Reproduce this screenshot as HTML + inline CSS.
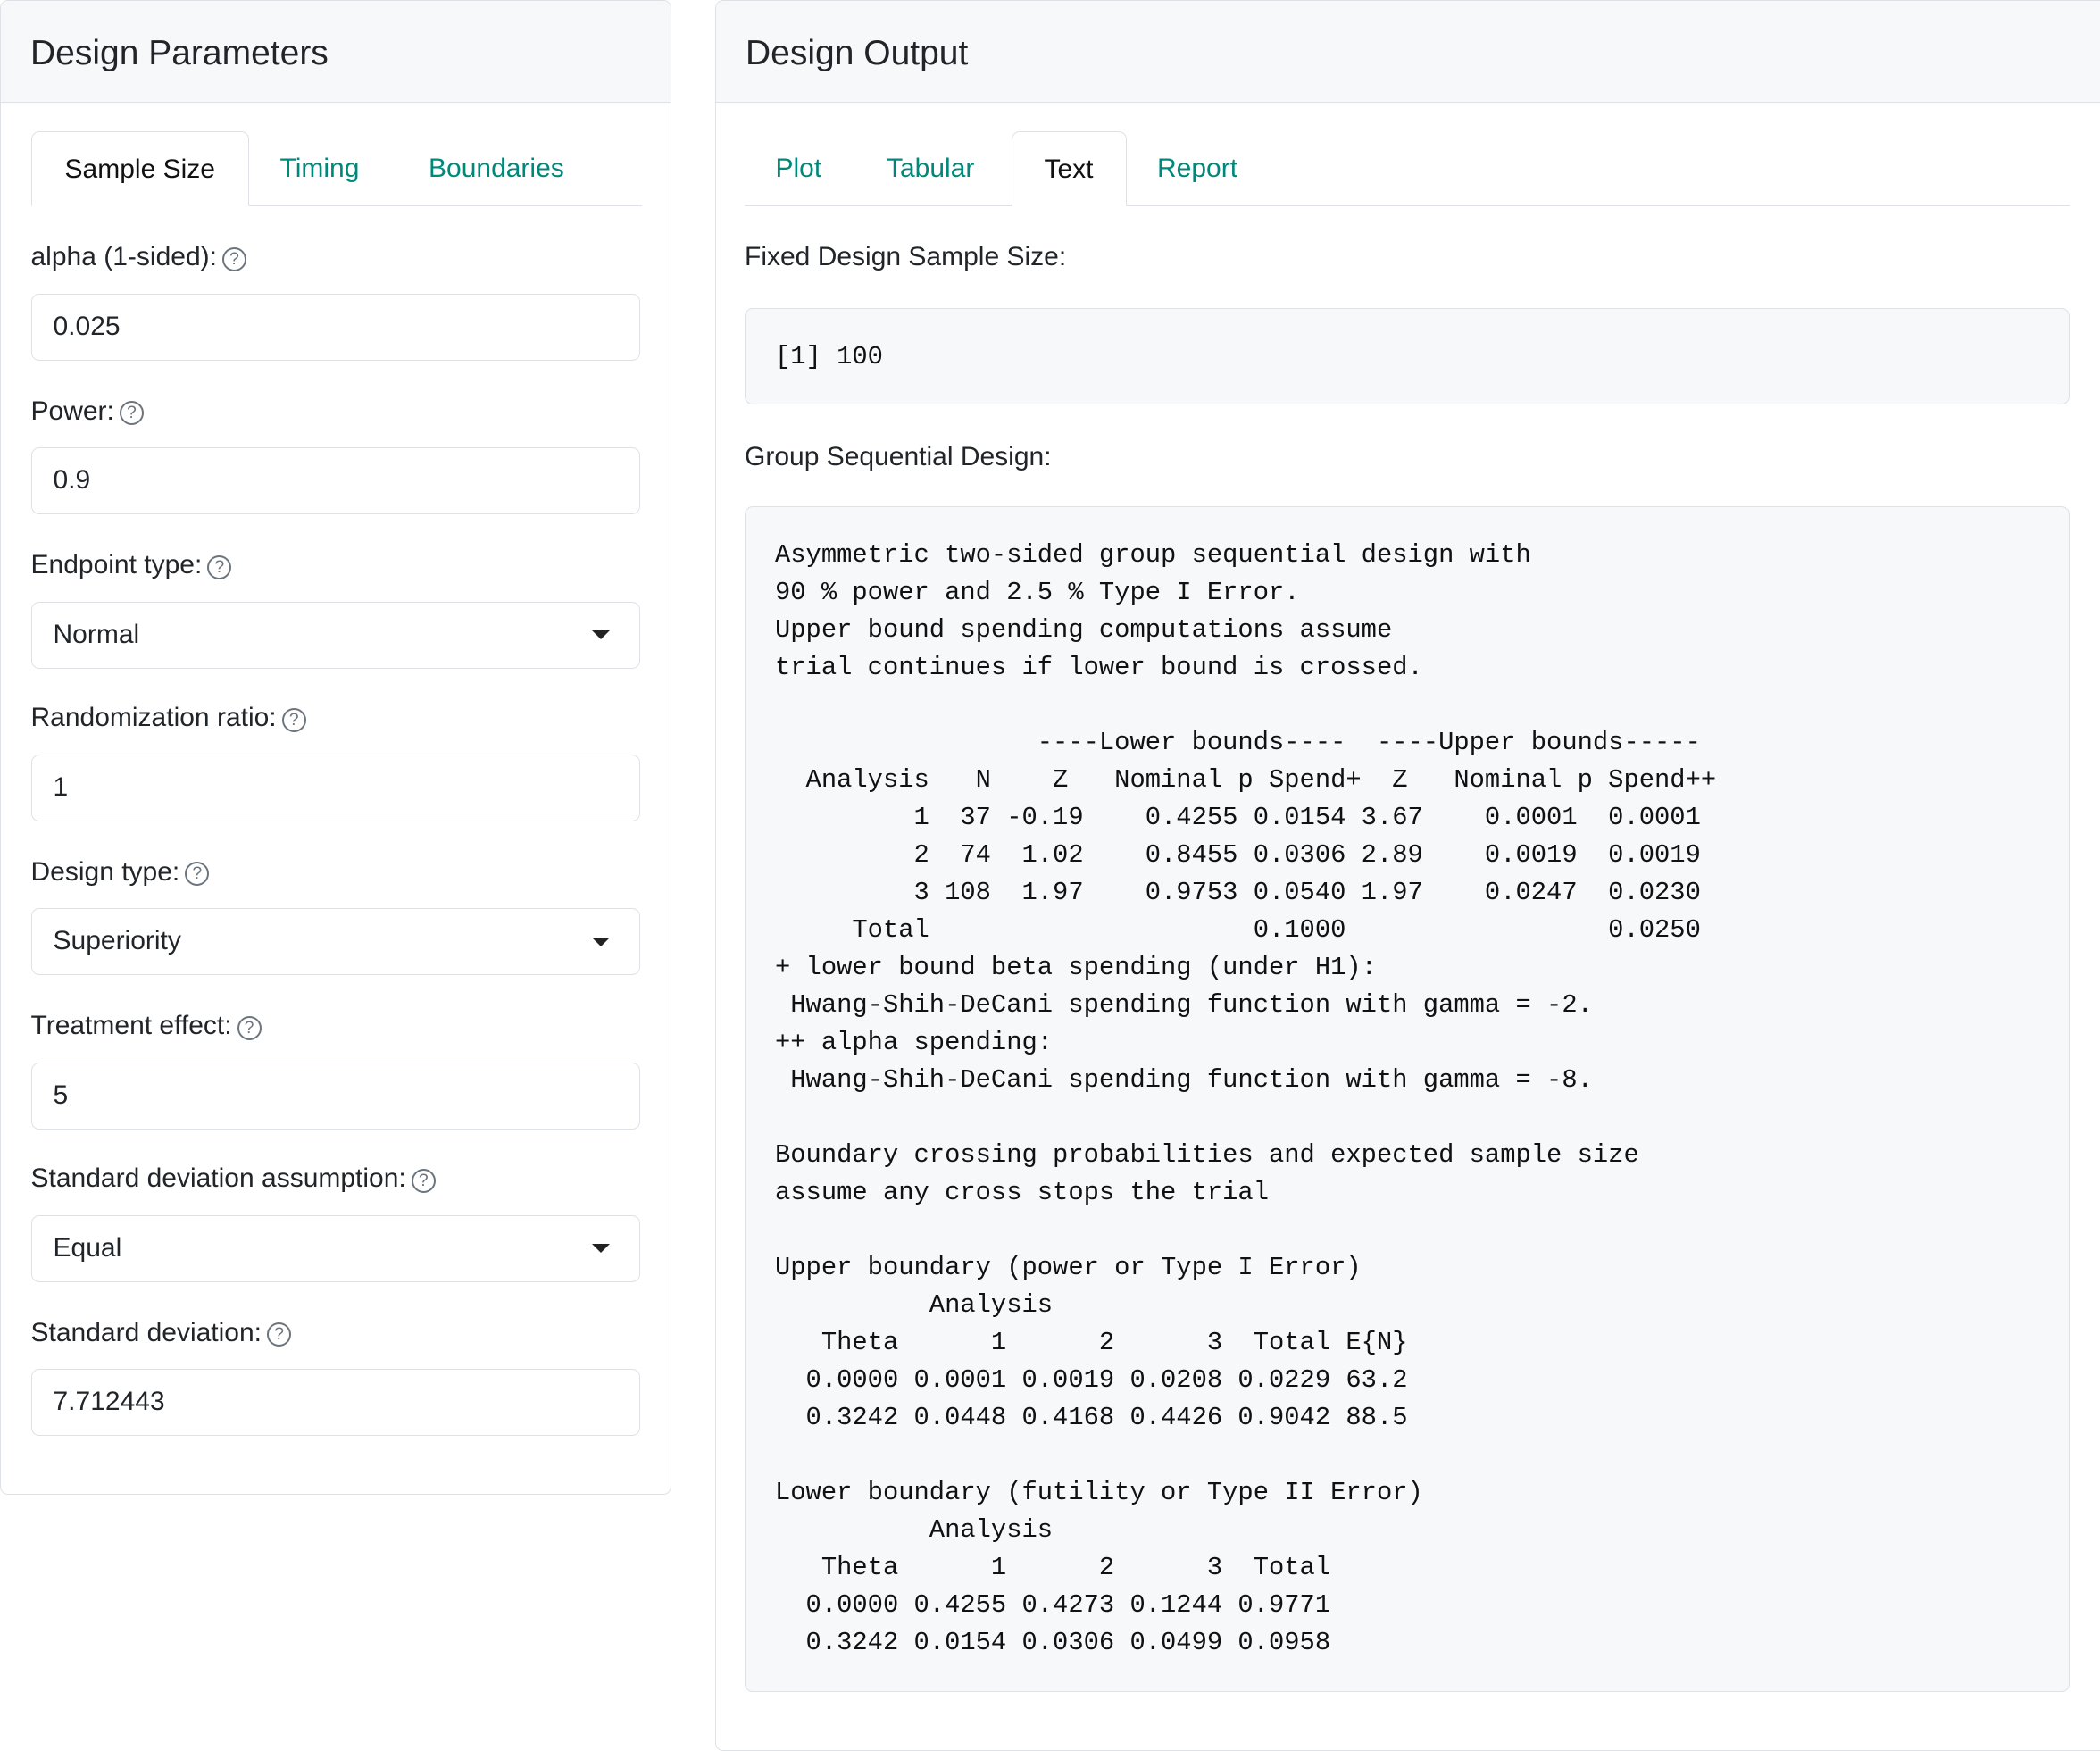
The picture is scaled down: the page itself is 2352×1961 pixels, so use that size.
<!DOCTYPE html>
<html><head><meta charset="utf-8"><style>
html,body{margin:0;padding:0;background:#fff;}
#w{zoom:1.5;width:1568px;height:1307px;position:relative;overflow:hidden;font-family:"Liberation Sans",sans-serif;color:#212529;}
.card{position:absolute;border:1px solid #dee2e6;border-radius:6px;background:#fff;overflow:hidden;box-sizing:border-box;}
.hd{height:76px;background:#f7f8fa;border-bottom:1px solid #dee2e6;box-sizing:border-box;font-size:26px;padding-left:22px;line-height:78px;}
.a{position:absolute;}
.tabs{position:absolute;height:56px;border-bottom:1px solid #dee2e6;box-sizing:border-box;}
.tab{position:absolute;top:0;height:56px;line-height:56px;font-size:20px;color:#00897b;}
.tab.on{color:#111;border:1px solid #dee2e6;border-bottom:1px solid #fff;border-radius:6px 6px 0 0;background:#fff;box-sizing:border-box;text-align:center;}
.lbl{position:absolute;left:23px;font-size:20px;line-height:24px;}
.q{display:inline-block;width:18px;height:18px;border:1.6px solid #6c757d;border-radius:50%;box-sizing:border-box;font-size:13px;line-height:15px;text-align:center;color:#6c757d;vertical-align:1px;margin-left:4px;}
.in{position:absolute;left:23px;width:455px;height:50px;border:1px solid #dee2e6;border-radius:6px;box-sizing:border-box;font-size:20px;line-height:48px;padding-left:16px;}
.car{position:absolute;right:22px;top:21px;width:0;height:0;border-left:7px solid transparent;border-right:7px solid transparent;border-top:7px solid #222;}
.pre{position:absolute;left:556px;width:989px;background:#f7f8fa;border:1px solid #dee2e6;border-radius:6px;box-sizing:border-box;}
pre{margin:0;font-family:"Liberation Mono",monospace;font-size:19.2px;line-height:28px;color:#111;}
</style></head><body><div id="w">
<div class="card" style="left:0;top:0;width:501px;height:1116px;">
<div class="hd">Design Parameters</div>
</div>
<div class="tabs" style="left:23px;top:98px;width:456px;">
<div class="tab on" style="left:0;width:163px;">Sample Size</div>
<div class="tab" style="left:186px;">Timing</div>
<div class="tab" style="left:297px;">Boundaries</div>
</div>
<div class="lbl" style="top:180px">alpha (1-sided):<span class="q">?</span></div>
<div class="in" style="top:219px">0.025</div>
<div class="lbl" style="top:295px">Power:<span class="q">?</span></div>
<div class="in" style="top:334px">0.9</div>
<div class="lbl" style="top:410px">Endpoint type:<span class="q">?</span></div>
<div class="in" style="top:449px">Normal<div class="car"></div></div>
<div class="lbl" style="top:524px">Randomization ratio:<span class="q">?</span></div>
<div class="in" style="top:563px">1</div>
<div class="lbl" style="top:639px">Design type:<span class="q">?</span></div>
<div class="in" style="top:678px">Superiority<div class="car"></div></div>
<div class="lbl" style="top:754px">Treatment effect:<span class="q">?</span></div>
<div class="in" style="top:793px">5</div>
<div class="lbl" style="top:868px">Standard deviation assumption:<span class="q">?</span></div>
<div class="in" style="top:907px">Equal<div class="car"></div></div>
<div class="lbl" style="top:983px">Standard deviation:<span class="q">?</span></div>
<div class="in" style="top:1022px">7.712443</div>

<div class="card" style="left:534px;top:0;width:1040px;height:1307px;">
<div class="hd">Design Output</div>
</div>
<div class="tabs" style="left:556px;top:98px;width:989px;">
<div class="tab" style="left:23px;">Plot</div>
<div class="tab" style="left:106px;">Tabular</div>
<div class="tab on" style="left:199px;width:86px;">Text</div>
<div class="tab" style="left:308px;">Report</div>
</div>
<div class="lbl" style="left:556px;top:180px">Fixed Design Sample Size:</div>
<div class="pre" style="top:230px;height:72px;"><pre style="position:absolute;left:22px;top:22px;">[1] 100</pre></div>
<div class="lbl" style="left:556px;top:329px">Group Sequential Design:</div>
<div class="pre" style="top:378px;height:885px;"><pre style="position:absolute;left:22px;top:22px;">Asymmetric two-sided group sequential design with
90 % power and 2.5 % Type I Error.
Upper bound spending computations assume
trial continues if lower bound is crossed.

                 ----Lower bounds----  ----Upper bounds-----
  Analysis   N    Z   Nominal p Spend+  Z   Nominal p Spend++
         1  37 -0.19    0.4255 0.0154 3.67    0.0001  0.0001
         2  74  1.02    0.8455 0.0306 2.89    0.0019  0.0019
         3 108  1.97    0.9753 0.0540 1.97    0.0247  0.0230
     Total                     0.1000                 0.0250
+ lower bound beta spending (under H1):
 Hwang-Shih-DeCani spending function with gamma = -2.
++ alpha spending:
 Hwang-Shih-DeCani spending function with gamma = -8.

Boundary crossing probabilities and expected sample size
assume any cross stops the trial

Upper boundary (power or Type I Error)
          Analysis
   Theta      1      2      3  Total E{N}
  0.0000 0.0001 0.0019 0.0208 0.0229 63.2
  0.3242 0.0448 0.4168 0.4426 0.9042 88.5

Lower boundary (futility or Type II Error)
          Analysis
   Theta      1      2      3  Total
  0.0000 0.4255 0.4273 0.1244 0.9771
  0.3242 0.0154 0.0306 0.0499 0.0958</pre></div>
</div></body></html>
